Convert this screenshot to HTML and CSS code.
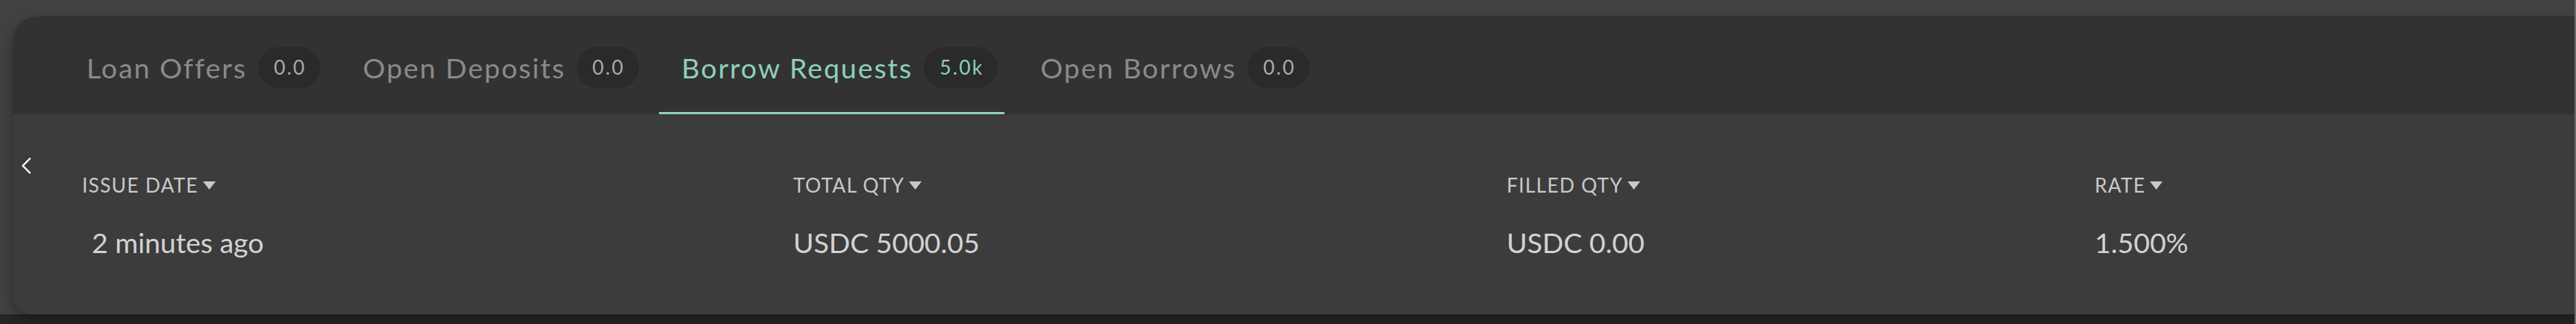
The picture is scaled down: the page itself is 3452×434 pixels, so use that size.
FILE: index.html
```html
<!DOCTYPE html>
<html>
<head>
<meta charset="utf-8">
<link rel="stylesheet" href="styles.css">
</head>
<body>
<div class="page">
  <div class="stage">
    <div class="card">
      <div class="tabbar">
        <div class="tab"><span class="tab-label">Loan Offers</span><span class="badge">0.0</span></div>
        <div class="tab"><span class="tab-label">Open Deposits</span><span class="badge">0.0</span></div>
        <div class="tab active"><span class="tab-label">Borrow Requests</span><span class="badge">5.0k</span></div>
        <div class="tab"><span class="tab-label">Open Borrows</span><span class="badge">0.0</span></div>
      </div>
      <div class="content">
        <button class="back" aria-label="Back">
          <svg width="14" height="22" viewBox="0 0 14 22"><polyline points="12,1.5 2.5,11 12,20.5" fill="none" stroke="#ffffff" stroke-width="2.4" stroke-linecap="round" stroke-linejoin="round"/></svg>
        </button>
        <div class="table">
          <div class="th">ISSUE DATE<svg class="sort" width="17" height="11" viewBox="0 0 17 11"><polygon points="0,0 17,0 8.5,11" fill="#c9c9c9"/></svg></div>
          <div class="th">TOTAL QTY<svg class="sort" width="17" height="11" viewBox="0 0 17 11"><polygon points="0,0 17,0 8.5,11" fill="#c9c9c9"/></svg></div>
          <div class="th">FILLED QTY<svg class="sort" width="17" height="11" viewBox="0 0 17 11"><polygon points="0,0 17,0 8.5,11" fill="#c9c9c9"/></svg></div>
          <div class="th">RATE<svg class="sort" width="17" height="11" viewBox="0 0 17 11"><polygon points="0,0 17,0 8.5,11" fill="#c9c9c9"/></svg></div>
          <div class="td first">2 minutes ago</div>
          <div class="td">USDC 5000.05</div>
          <div class="td">USDC 0.00</div>
          <div class="td">1.500%</div>
        </div>
      </div>
    </div>
  </div>
  <div class="edge"></div>
</div>
</body>
</html>
```

FILE: styles.css
```css
html, body {
  margin: 0;
  padding: 0;
}
body {
  width: 3452px;
  height: 434px;
  overflow: hidden;
  background: #262626;
  font-family: "Lato", "Noto Sans", sans-serif;
}
.page {
  display: flex;
  height: 434px;
}
.stage {
  flex: 1;
  height: 421px;
  background: #424242;
  padding: 22px 0 0 17px;
  box-sizing: border-box;
  display: flex;
}
.edge {
  width: 2px;
  background: #6a6a6a;
}
.card {
  flex: 1;
  height: 399px;
  display: flex;
  flex-direction: column;
  border-radius: 34px 0 0 26px;
  overflow: hidden;
  background: #3c3c3c;
  box-shadow: 0 6px 18px rgba(0, 0, 0, 0.35);
}
.tabbar {
  height: 131px;
  box-sizing: border-box;
  background: #323232;
  display: flex;
  align-items: stretch;
  padding: 8px 0 0 69px;
  gap: 18px;
}
.tab {
  display: flex;
  align-items: center;
  padding: 0 9px 0 30px;
  border-bottom: 3px solid transparent;
}
.tab-label {
  font-size: 37.4px;
  letter-spacing: 2px;
  color: #8a8a8a;
}
.badge {
  margin-left: 15px;
  height: 55px;
  line-height: 55px;
  padding: 0 19px 0 21px;
  border-radius: 28px;
  background: #2a2a2a;
  color: #a9a9a9;
  font-size: 26.4px;
  letter-spacing: 2.2px;
}
.tab.active {
  border-bottom-color: #8ecfbd;
}
.tab.active .tab-label,
.tab.active .badge {
  color: #8ecfbd;
}
.content {
  flex: 1;
  display: flex;
  align-items: flex-start;
}
.back {
  margin: 58px 0 0 11px;
  padding: 0;
  border: 0;
  background: none;
  width: 14px;
  height: 22px;
  display: block;
}
.back svg {
  display: block;
}
.table {
  margin-left: 68px;
  padding-top: 79px;
  display: grid;
  grid-template-columns: 953px 956px 788px 1fr;
  row-gap: 38px;
  flex: 1;
}
.th {
  font-size: 26.4px;
  line-height: 32px;
  letter-spacing: 1.2px;
  color: #c9c9c9;
  display: flex;
  align-items: center;
}
.sort {
  margin-left: 6px;
}
.td {
  font-size: 37.4px;
  line-height: 45px;
  color: #d3d3d3;
}
.td.first {
  padding-left: 13px;
}
```
